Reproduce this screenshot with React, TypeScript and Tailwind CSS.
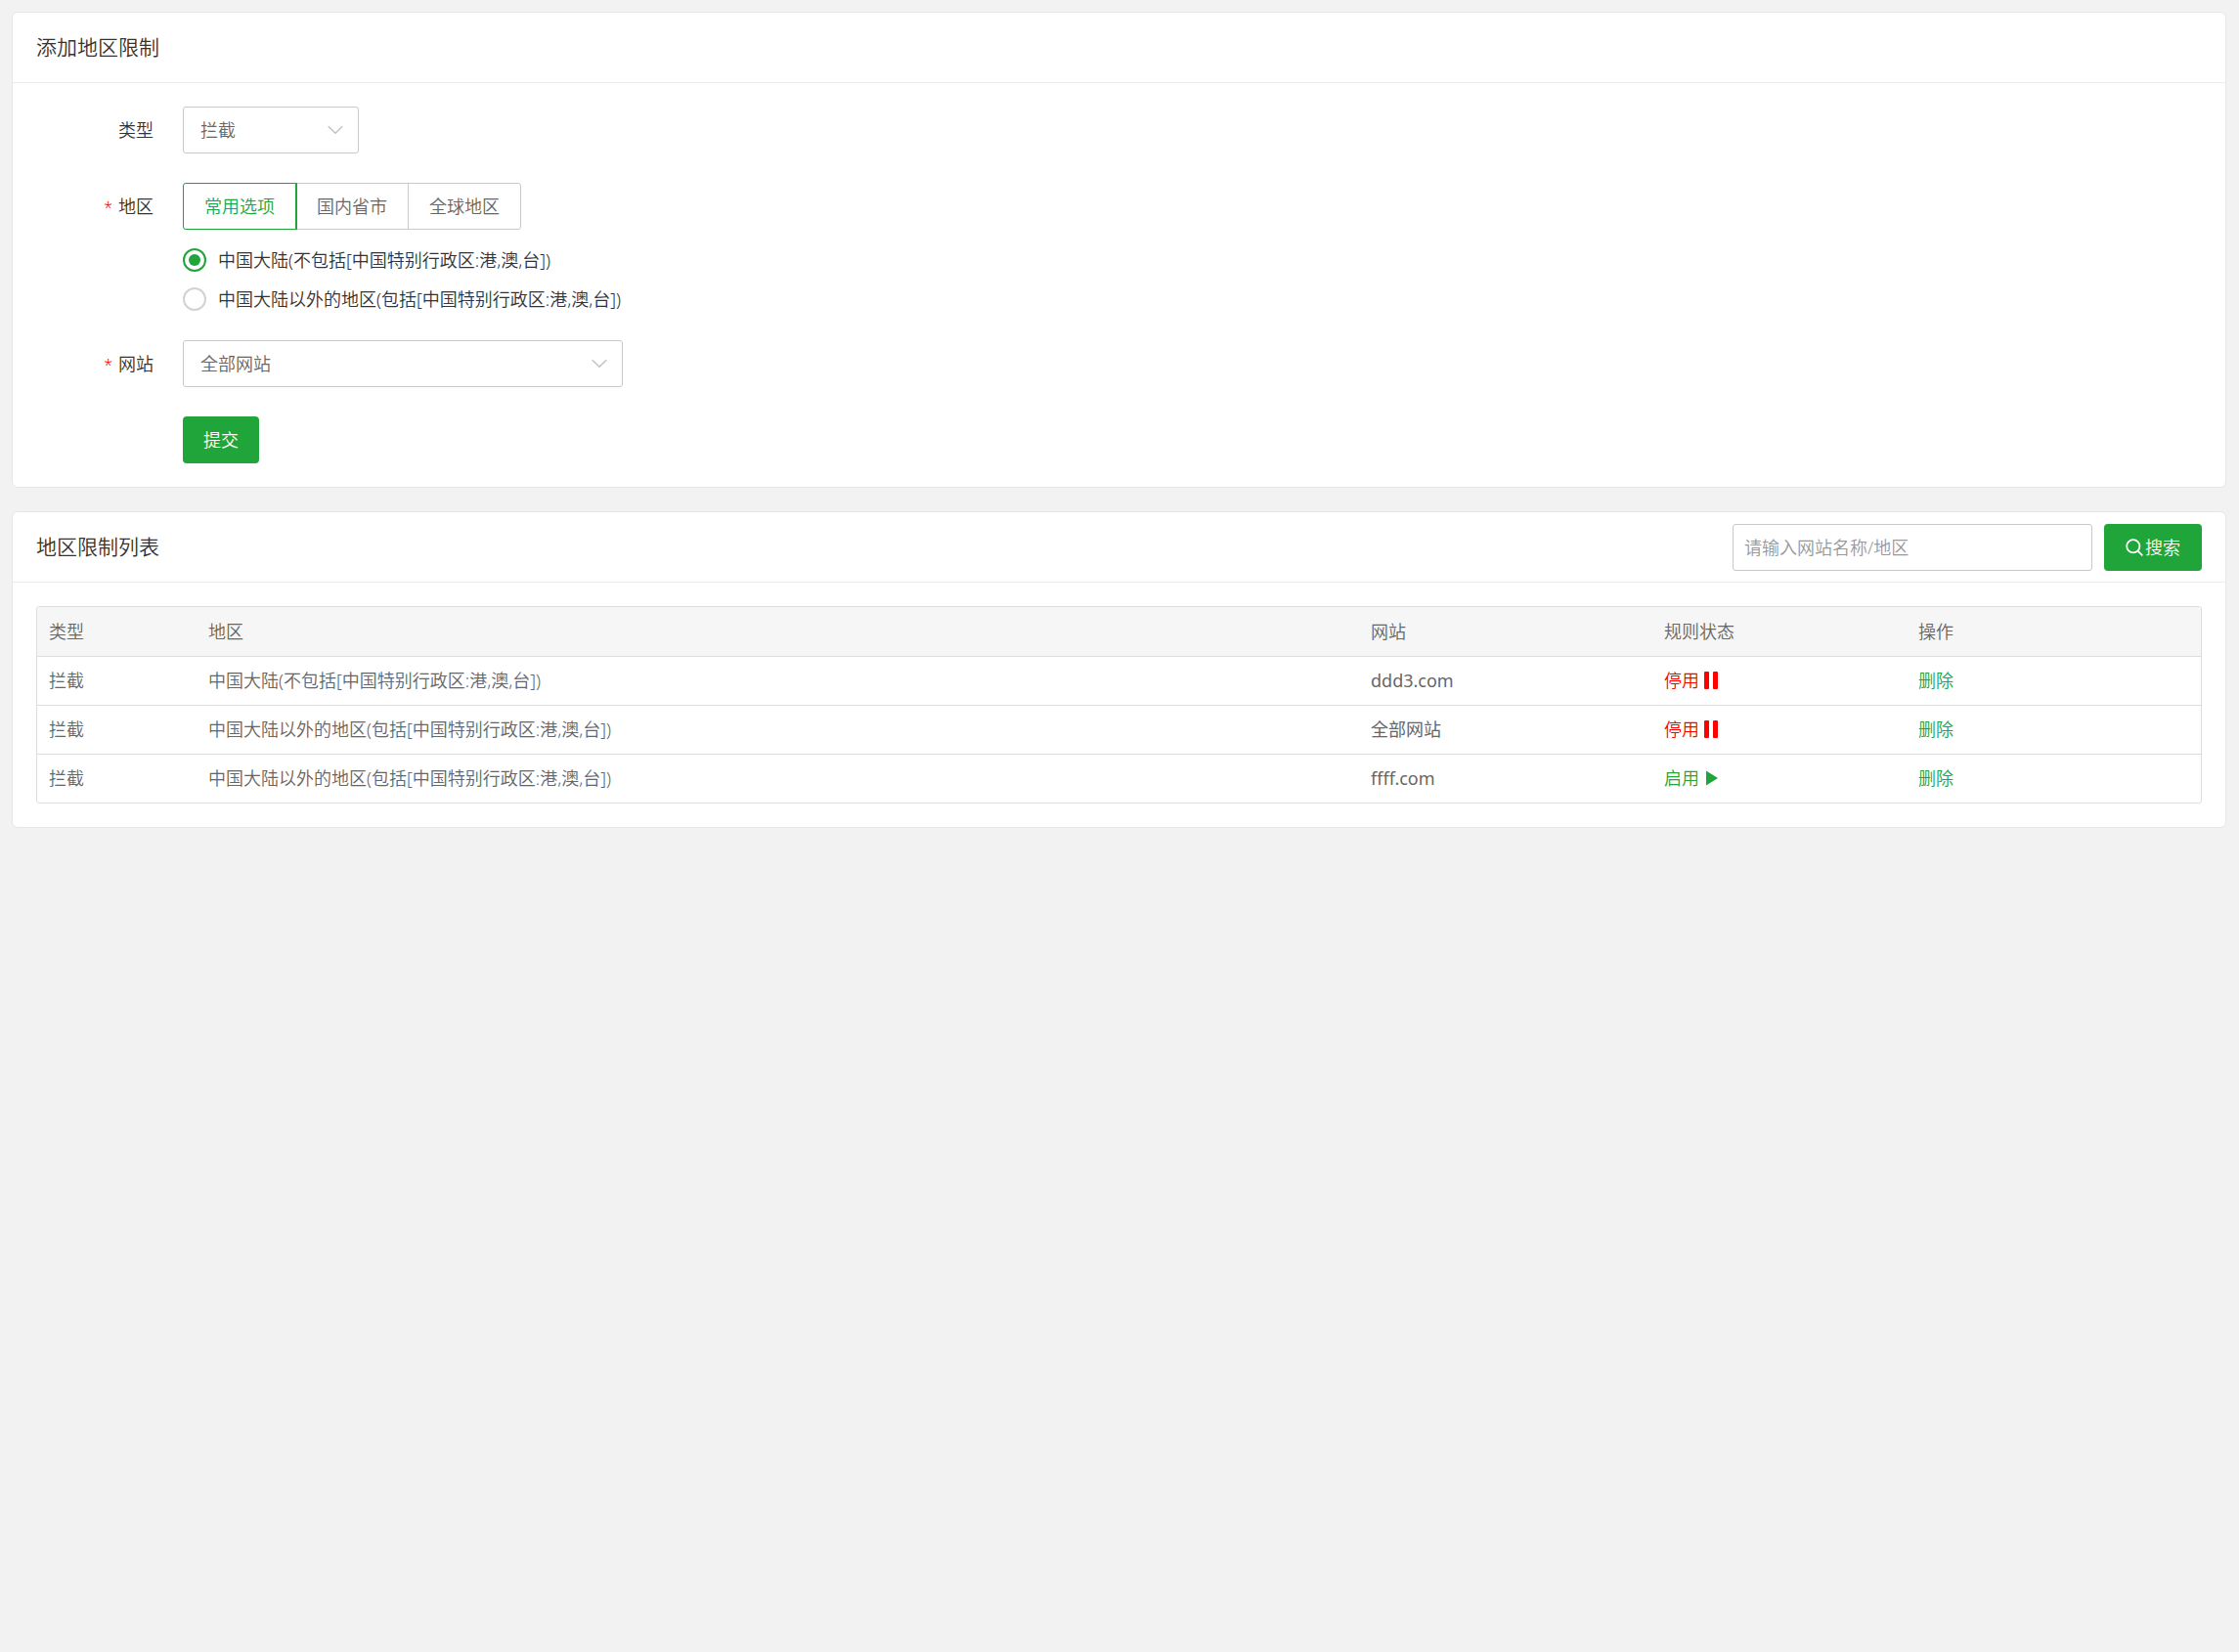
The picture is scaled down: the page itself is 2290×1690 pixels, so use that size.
import { useState } from "react";

const domestic = "中国大陆(不包括[中国特别行政区:港,澳,台])";
const overseas = "中国大陆以外的地区(包括[中国特别行政区:港,澳,台])";

const tabs = ["常用选项", "国内省市", "全球地区"];

const initialRules = [
  { id: 1, type: "拦截", region: domestic, site: "ddd3.com", enabled: false },
  { id: 2, type: "拦截", region: overseas, site: "全部网站", enabled: false },
  { id: 3, type: "拦截", region: overseas, site: "ffff.com", enabled: true },
];

function Chevron() {
  return (
    <svg
      className="pointer-events-none absolute top-1/2 right-4 -translate-y-1/2"
      width="16"
      height="9"
      viewBox="0 0 16 9"
      fill="none"
      stroke="#c2c2c2"
      strokeWidth="1.5"
    >
      <path d="M0.7 0.8 L8 7.8 L15.3 0.8" />
    </svg>
  );
}

function PauseIcon() {
  return (
    <svg width="14" height="18" viewBox="0 0 14 18" fill="currentColor">
      <rect x="0" y="0" width="5" height="18" rx="1" />
      <rect x="9" y="0" width="5" height="18" rx="1" />
    </svg>
  );
}

function PlayIcon() {
  return (
    <svg width="14" height="16" viewBox="0 0 14 16" fill="currentColor">
      <path d="M2 0.5 L14 8 L2 15.5 Z" />
    </svg>
  );
}

function SearchIcon() {
  return (
    <svg width="18" height="18" viewBox="0 0 18 18" fill="none" stroke="currentColor" strokeWidth="1.8">
      <circle cx="7.8" cy="7.8" r="6.6" />
      <path d="M12.6 12.6 L17.3 17.3" />
    </svg>
  );
}

export default function App() {
  const [tab, setTab] = useState(tabs[0]);
  const [region, setRegion] = useState(domestic);
  const [rules, setRules] = useState(initialRules);
  const [keyword, setKeyword] = useState("");

  const toggleRule = (id: number) => {
    setRules((prev) => prev.map((r) => (r.id === id ? { ...r, enabled: !r.enabled } : r)));
  };

  const removeRule = (id: number) => {
    setRules((prev) => prev.filter((r) => r.id !== id));
  };

  return (
    <div className="flex min-h-screen flex-col gap-6 bg-[#f2f2f2] py-3 pr-[13px] pl-3 font-['Noto_Sans','Noto_Sans_CJK_SC',sans-serif] text-lg font-[350] text-[#333]">
      {/* Add form */}
      <section className="rounded-md border border-[#e6e6e6] bg-white">
        <div className="flex h-18 items-center border-b border-[#ebebeb] px-6">
          <h2 className="text-[21px] font-[350]">添加地区限制</h2>
        </div>
        <form className="flex flex-col gap-[30px] p-6" onSubmit={(e) => e.preventDefault()}>
          <div className="flex gap-[30px]">
            <label htmlFor="type" className="w-30 text-right leading-[48px]">
              类型
            </label>
            <div className="relative w-45">
              <select id="type" className="h-12 w-full appearance-none rounded-[3px] border border-[#c9c9c9] bg-white px-[17px] text-[#666]">
                <option>拦截</option>
                <option>放行</option>
              </select>
              <Chevron />
            </div>
          </div>

          <div className="flex gap-[30px]">
            <div id="region-label" className="w-30 text-right leading-[48px]">
              <span className="mr-1.5 text-base text-[#f00]">*</span>地区
            </div>
            <div>
              <div className="flex">
                {tabs.map((name) => (
                  <button
                    key={name}
                    type="button"
                    onClick={() => setTab(name)}
                    className={`h-12 border px-[21px] first:rounded-l-[3px] last:rounded-r-[3px] not-first:-ml-px ${
                      tab === name
                        ? "z-10 border-[#20a53a] text-[#20a53a] shadow-[1px_0_0_0_#20a53a]"
                        : "border-[#c9c9c9] text-[#666]"
                    }`}
                  >
                    {name}
                  </button>
                ))}
              </div>
              <div role="radiogroup" aria-labelledby="region-label" className="mt-[19px] flex flex-col gap-4">
                {[domestic, overseas].map((name) => (
                  <label key={name} className="flex h-6 items-center gap-3">
                    <input
                      type="radio"
                      name="region"
                      checked={region === name}
                      onChange={() => setRegion(name)}
                      className="grid size-6 appearance-none place-items-center rounded-full border-2 border-[#d2d2d2] before:size-3 before:rounded-full checked:border-[#20a53a] checked:before:bg-[#20a53a]"
                    />
                    {name}
                  </label>
                ))}
              </div>
            </div>
          </div>

          <div className="flex gap-[30px]">
            <label htmlFor="site" className="w-30 text-right leading-[48px]">
              <span className="mr-1.5 text-base text-[#f00]">*</span>网站
            </label>
            <div className="relative w-[450px]">
              <select id="site" className="h-12 w-full appearance-none rounded-[3px] border border-[#c9c9c9] bg-white px-[17px] text-[#666]">
                <option>全部网站</option>
                <option>ddd3.com</option>
                <option>ffff.com</option>
              </select>
              <Chevron />
            </div>
          </div>

          <button type="submit" className="ml-[150px] h-12 self-start rounded-sm bg-[#20a53a] px-[21px] text-white">
            提交
          </button>
        </form>
      </section>

      {/* Rule list */}
      <section className="rounded-md border border-[#e6e6e6] bg-white">
        <div className="flex h-18 items-center border-b border-[#ebebeb] px-6">
          <h2 className="text-[21px] font-[350]">地区限制列表</h2>
          <form className="ml-auto flex gap-3" onSubmit={(e) => e.preventDefault()}>
            <input
              type="text"
              aria-label="搜索"
              placeholder="请输入网站名称/地区"
              value={keyword}
              onChange={(e) => setKeyword(e.target.value)}
              className="h-12 w-92 rounded-[3px] border border-[#c9c9c9] px-[11px] placeholder:text-[#999]"
            />
            <button type="submit" className="flex h-12 w-25 items-center justify-center gap-0.5 rounded-sm bg-[#20a53a] text-white">
              <SearchIcon />
              搜索
            </button>
          </form>
        </div>
        <div className="p-6">
          <div className="overflow-hidden rounded-[3px] border border-[#ddd]">
            <table className="w-full table-fixed text-left text-[#666]">
              <thead className="bg-[#f6f6f6]">
                <tr className="h-[50px] border-b border-[#ddd] *:px-3 *:font-[350]">
                  <th className="w-[163px]">类型</th>
                  <th>地区</th>
                  <th className="w-75">网站</th>
                  <th className="w-65">规则状态</th>
                  <th className="w-[301px]">操作</th>
                </tr>
              </thead>
              <tbody>
                {rules.map((rule) => (
                  <tr key={rule.id} className="h-[50px] border-[#ddd] not-last:border-b *:px-3">
                    <td>{rule.type}</td>
                    <td>{rule.region}</td>
                    <td className="font-normal">{rule.site}</td>
                    <td>
                      <button
                        type="button"
                        onClick={() => toggleRule(rule.id)}
                        className={`flex items-center gap-[5px] ${rule.enabled ? "text-[#20a53a]" : "text-[#f00]"}`}
                      >
                        {rule.enabled ? "启用" : "停用"}
                        {rule.enabled ? <PlayIcon /> : <PauseIcon />}
                      </button>
                    </td>
                    <td>
                      <button type="button" onClick={() => removeRule(rule.id)} className="text-[#20a53a]">
                        删除
                      </button>
                    </td>
                  </tr>
                ))}
              </tbody>
            </table>
          </div>
        </div>
      </section>
    </div>
  );
}
